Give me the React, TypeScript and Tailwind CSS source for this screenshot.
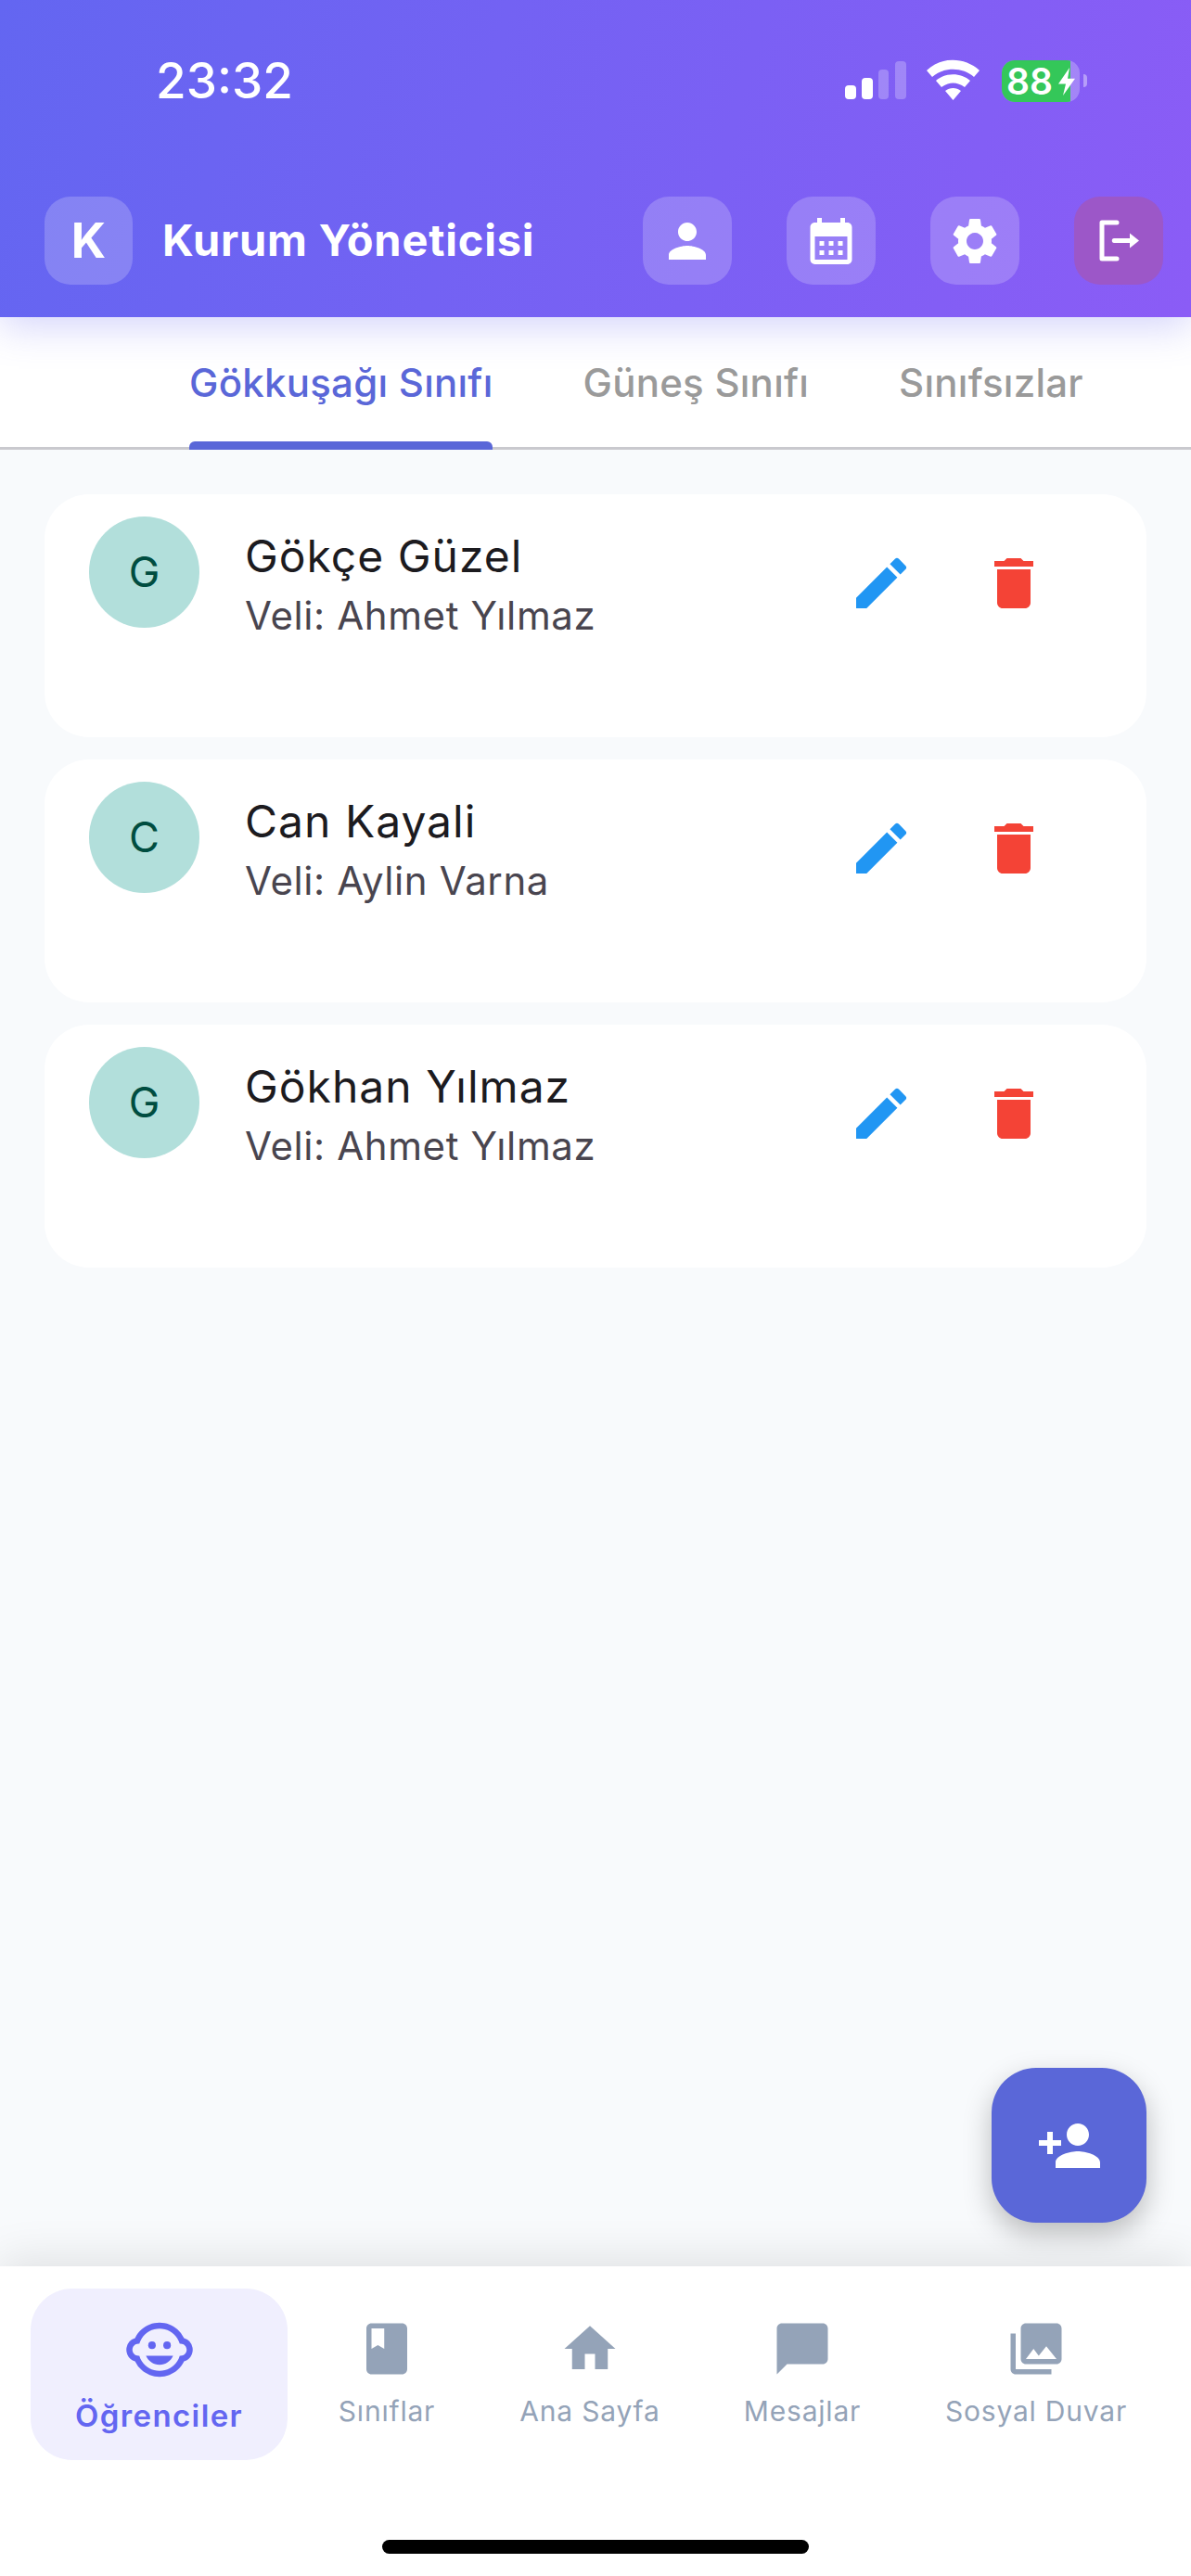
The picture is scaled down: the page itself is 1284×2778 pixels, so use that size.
import {
  MdBook,
  MdCalendarMonth,
  MdChatBubble,
  MdChildCare,
  MdDelete,
  MdEdit,
  MdHome,
  MdPerson,
  MdPersonAdd,
  MdPhotoLibrary,
  MdSettings,
} from 'react-icons/md'

const students = [
  { id: 1, initial: 'G', name: 'Gökçe Güzel', parent: 'Veli: Ahmet Yılmaz' },
  { id: 2, initial: 'C', name: 'Can Kayali', parent: 'Veli: Aylin Varna' },
  { id: 3, initial: 'G', name: 'Gökhan Yılmaz', parent: 'Veli: Ahmet Yılmaz' },
]

const navItems = [
  { label: 'Sınıflar', icon: MdBook, width: 'w-[214px]' },
  { label: 'Ana Sayfa', icon: MdHome, width: 'w-[224px]' },
  { label: 'Mesajlar', icon: MdChatBubble, width: 'w-[234px]' },
  { label: 'Sosyal Duvar', icon: MdPhotoLibrary, width: 'w-[270px]' },
]

function StatusIcons() {
  return (
    <svg width="146" height="48" viewBox="0 0 146 48" className="shrink-0">
      <rect x="0" y="29" width="12" height="15" rx="4" fill="#fff" />
      <rect x="18" y="21" width="12" height="23" rx="4" fill="#fff" />
      <rect x="36" y="12" width="11" height="32" rx="4" fill="#fff" fillOpacity="0.25" />
      <rect x="54" y="3" width="12" height="41" rx="4" fill="#fff" fillOpacity="0.25" />
      <path
        d="M88 13 C103 -2 129 -2 145 13 L139 20 C127 9 106 9 94 20 Z M98 24 C108 15 125 15 135 24 L129 31 C121 25 112 25 104 31 Z M108 35 C113 31 120 31 125 35 L116.500 45 Z"
        fill="#fff"
      />
    </svg>
  )
}

function Battery() {
  return (
    <div className="flex items-center ml-[23px]">
      <div className="relative w-[84px] h-[45px] rounded-[14px] bg-white/25 overflow-hidden">
        <div className="absolute left-0 top-0 bottom-0 w-[74px] bg-[#34c759]" />
        <span className="absolute left-[5px] top-0 leading-[45px] text-[39px] font-semibold text-white [font-family:Inter,sans-serif]">
          88
        </span>
        <svg width="20" height="30" viewBox="0 0 20 36" className="absolute left-[60px] top-[8px]" preserveAspectRatio="none">
          <path d="M13 0 L1 21 H9 L6 36 L19 14 H11 Z" fill="#fff" />
        </svg>
      </div>
      <div className="w-[4px] h-[14px] ml-[4px] rounded-r-full bg-white/40" />
    </div>
  )
}

function LogoutIcon() {
  return (
    <svg width="60" height="60" viewBox="0 0 60 60">
      <path d="M28 10 H12 V49 H28" fill="none" stroke="#fff" strokeWidth="5" strokeLinecap="round" strokeLinejoin="round" />
      <path d="M25 27 H42 V21.500 L52 29.500 L42 37.500 V32 H25 C22 32 22 27 25 27 Z" fill="#fff" />
    </svg>
  )
}

function HeaderButton({ children, danger }: { children: React.ReactNode; danger?: boolean }) {
  return (
    <button
      className={`flex items-center justify-center w-[96px] h-[95px] rounded-[28px] text-white ${
        danger ? 'bg-[#9c57c8]' : 'bg-white/20'
      }`}
    >
      {children}
    </button>
  )
}

export default function App() {
  return (
    <div className="relative flex flex-col w-[1284px] h-[2778px] overflow-hidden bg-[#f8fafc] [font-family:Inter,sans-serif]">
      <header className="relative z-10 h-[342px] shrink-0 bg-[linear-gradient(105deg,#6366f1,#8b5cf6)] shadow-[0_10px_40px_rgba(99,102,241,0.28)]">
        <div className="flex items-center h-[48px] absolute left-0 right-0 top-[63px]">
          <span className="ml-[168px] text-[53px] font-medium leading-none text-white">23:32</span>
          <div className="flex items-center ml-auto mr-[112px]">
            <StatusIcons />
            <Battery />
          </div>
        </div>
        <div className="flex items-center pt-[212px] pl-[48px] pr-[30px]">
          <div className="flex items-center justify-center w-[95px] h-[95px] rounded-[28px] bg-white/20 text-[52px] font-bold text-white">
            K
          </div>
          <h1 className="ml-[32px] text-[47px] font-bold tracking-[0.8px] text-white">Kurum Yöneticisi</h1>
          <div className="flex ml-auto gap-[59px]">
            <HeaderButton>
              <MdPerson size={60} />
            </HeaderButton>
            <HeaderButton>
              <MdCalendarMonth size={60} />
            </HeaderButton>
            <HeaderButton>
              <MdSettings size={60} />
            </HeaderButton>
            <HeaderButton danger>
              <LogoutIcon />
            </HeaderButton>
          </div>
        </div>
      </header>

      <nav className="flex h-[143px] shrink-0 bg-white border-b-[3px] border-[#c9c9ce] pl-[204px] text-[42px] font-medium tracking-[0.25px]">
        <div className="relative flex items-center h-full text-[#5a67d8]">
          Gökkuşağı Sınıfı
          <div className="absolute left-0 right-0 -bottom-[3px] h-[9px] rounded-t-[6px] bg-[#5a67d8]" />
        </div>
        <div className="flex items-center ml-[97px] text-[#9a9a9a]">Güneş Sınıfı</div>
        <div className="flex items-center ml-[97px] text-[#9a9a9a]">Sınıfsızlar</div>
      </nav>

      <main className="flex-1 flex flex-col gap-[24px] px-[48px] pt-[48px]">
        {students.map((student) => (
          <div key={student.id} className="flex items-start h-[262px] rounded-[48px] bg-white pl-[48px] pt-[24px]">
            <div className="flex items-center justify-center w-[119px] h-[120px] rounded-full bg-[#b2dfdb] text-[45px] text-[#004d40]">
              {student.initial}
            </div>
            <div className="ml-[49px] w-[650px] pt-[14px]">
              <div className="text-[48px] leading-[58px] tracking-[1px] text-[#1c1b1f]">{student.name}</div>
              <div className="mt-[10px] text-[42px] leading-[50px] tracking-[0.6px] text-[#49454f]">{student.parent}</div>
            </div>
            <MdEdit size={72} className="mt-[36px] text-[#2196f3]" />
            <MdDelete size={72} className="ml-[71px] mt-[36px] text-[#f44336]" />
          </div>
        ))}
      </main>

      <button className="absolute right-[48px] top-[2230px] z-10 flex items-center justify-center w-[167px] h-[167px] rounded-[48px] bg-[#5a67d8] text-white shadow-[0_12px_30px_rgba(0,0,0,0.25)]">
        <MdPersonAdd size={72} />
      </button>

      <footer className="relative h-[334px] shrink-0 bg-white shadow-[0_-8px_44px_rgba(0,0,0,0.1)]">
        <div className="flex items-start pl-[33px] pt-[24px]">
          <div className="flex flex-col items-center w-[277px] h-[185px] rounded-[45px] bg-[#f0effe] pt-[27px]">
            <MdChildCare size={78} className="text-[#6366f1]" />
            <span className="mt-[12px] text-[33px] leading-[40px] font-semibold tracking-[1.4px] text-[#6366f1]">Öğrenciler</span>
          </div>
          {navItems.map((item) => (
            <div key={item.label} className={`flex flex-col items-center pt-[32px] ${item.width}`}>
              <item.icon size={66} className="text-[#94a3b8]" />
              <span className="mt-[16px] text-[30px] leading-[36px] tracking-[0.8px] text-[#94a3b8]">{item.label}</span>
            </div>
          ))}
        </div>
        <div className="absolute left-[412px] bottom-[24px] w-[460px] h-[15px] rounded-full bg-black" />
      </footer>
    </div>
  )
}
